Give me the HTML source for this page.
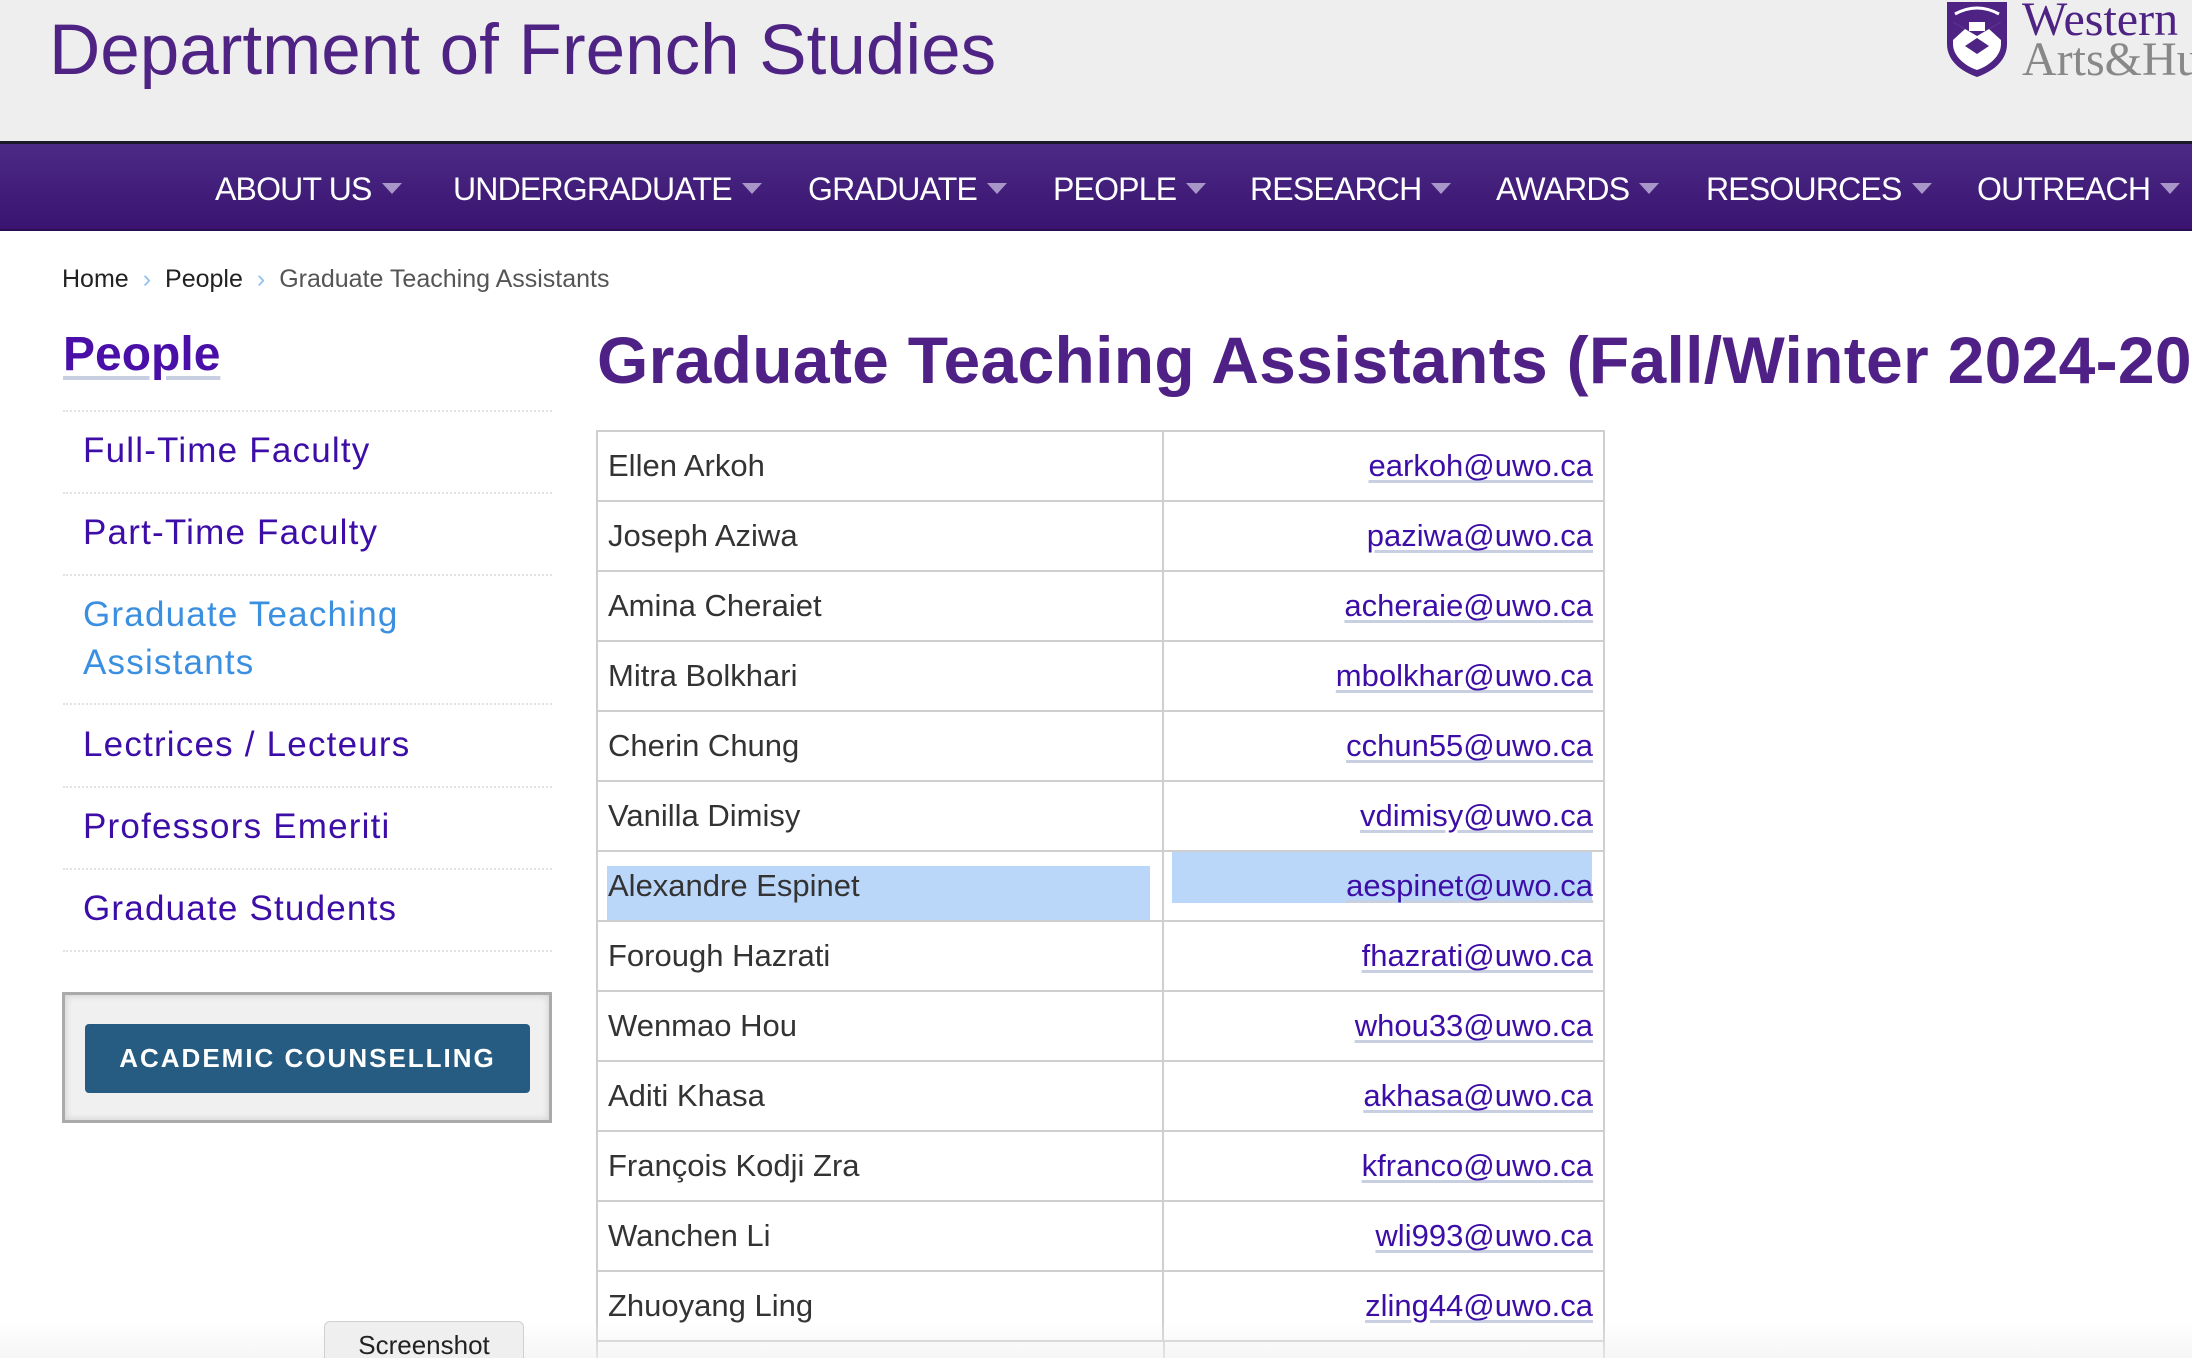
<!DOCTYPE html>
<html><head><meta charset="utf-8">
<style>
*{margin:0;padding:0;box-sizing:border-box}
html{width:2192px;height:1358px;overflow:hidden}
body{width:2192px;height:1358px;overflow:hidden;background:#fff;font-family:"Liberation Sans",Arial,sans-serif;position:relative}
.hdr{position:absolute;left:0;top:0;width:2192px;height:141px;background:#eeeeee}
.hdr h1{position:absolute;left:49px;top:10px;font-size:71px;font-weight:normal;color:#4e2384;white-space:nowrap}
.logo{position:absolute;left:1945px;top:0}
.wt{position:absolute;left:2022px;top:-4px;font-family:"Liberation Serif",serif;font-size:48px;color:#4e2384;white-space:nowrap;line-height:48px}
.wt2{top:36px;color:#888}
.navline{position:absolute;left:0;top:141px;width:2192px;height:3px;background:#1a1a2a}
.nav{position:absolute;left:0;top:144px;width:2192px;height:87px;background:linear-gradient(#4b2a86,#3a1470);border-bottom:2px solid #2a0f55}
.nav span{position:absolute;top:27px;font-size:32px;color:#fff;white-space:nowrap;letter-spacing:-0.8px}
.nav span:after{content:"";display:inline-block;margin-left:10px;vertical-align:6px;border-left:10px solid transparent;border-right:10px solid transparent;border-top:11px solid #a996c8}
.bc{position:absolute;left:62px;top:265px;font-size:25px;color:#222;white-space:nowrap}
.bc i{font-style:normal;color:#8fc0ee;margin:0 14px}
.bc b{font-weight:normal;color:#555}
.sbt{position:absolute;left:63px;top:327px;font-size:48px;font-weight:bold;color:#4a0fa8;text-decoration:underline;text-decoration-color:#c8cfe0;text-underline-offset:6px}
.dl{position:absolute;left:63px;width:489px;border-top:2px dotted #e2e2e2}
.sl{position:absolute;left:83px;font-size:35px;color:#3d0da8;letter-spacing:1.2px;line-height:48px;white-space:nowrap}
.box{position:absolute;left:62px;top:992px;width:490px;height:131px;border:3px solid #aaa;background:#f0f0f0;box-shadow:inset 0 0 8px rgba(0,0,0,.15)}
.btn{position:absolute;left:20px;top:29px;width:445px;height:69px;background:#265c82;border-radius:4px;color:#fff;font-size:26px;font-weight:bold;letter-spacing:2px;text-align:center;line-height:69px;white-space:nowrap}
.title{position:absolute;left:597px;top:322px;font-size:66px;font-weight:bold;color:#4f2186;white-space:nowrap;letter-spacing:0.3px;width:1595px;overflow:hidden}
table{position:absolute;left:596px;top:430px;border-collapse:collapse;width:1009px}
td{border:2px solid #cfcfcf;height:70px;font-size:31px;color:#333;padding:0 10px;white-space:nowrap}
td:first-child{width:566px}
td:last-child{text-align:right;color:#3d0da8;text-decoration:underline;text-decoration-color:#c8cfe0;text-underline-offset:4px}
.hl1{position:absolute;left:607px;top:866px;width:543px;height:54px;background:#bad6f8}
.hl2{position:absolute;left:1172px;top:852px;width:420px;height:51px;background:#bad6f8}
.shot{position:absolute;left:324px;top:1321px;width:200px;height:50px;background:#efefef;border:1px solid #d0d0d0;border-radius:6px;font-size:26px;color:#222;text-align:center;line-height:46px}
.fade{position:absolute;left:0;top:1320px;width:2192px;height:38px;background:linear-gradient(rgba(255,255,255,0),rgba(240,240,240,.6))}
.tail{position:absolute;left:596px;top:1340px;width:1009px;height:18px;border-left:2px solid #cfcfcf;border-right:2px solid #cfcfcf}
.tail:after{content:"";position:absolute;left:565px;top:0;height:18px;border-left:2px solid #cfcfcf}
</style></head><body>
<div class="hdr">
<h1>Department of French Studies</h1>
<svg class="logo" width="64" height="78" viewBox="0 0 64 78">
<path d="M2 2 H62 V44 C62 62 46 72 32 77 C18 72 2 62 2 44 Z" fill="#4e2384"/>
<path d="M8 22 L32 36 L56 22 L56 44 C56 56 44 66 32 70 C20 66 8 56 8 44 Z" fill="#fff"/>
<path d="M8 22 L20 29 L8 40Z M56 22 L44 29 L56 40Z" fill="#4e2384"/>
<path d="M32 38 L20 46 L32 54 L44 46Z" fill="#4e2384"/>
<rect x="24" y="22" width="16" height="9" fill="#fff"/>
<path d="M10 14 Q32 2 54 14" stroke="#fff" stroke-width="3" fill="none"/>
</svg>
<div class="wt">Western</div><div class="wt wt2">Arts&amp;Hu</div>
</div>
<div class="navline"></div>
<div class="nav">
<span style="left:215px">ABOUT US</span>
<span style="left:453px">UNDERGRADUATE</span>
<span style="left:808px">GRADUATE</span>
<span style="left:1053px">PEOPLE</span>
<span style="left:1250px">RESEARCH</span>
<span style="left:1496px">AWARDS</span>
<span style="left:1706px">RESOURCES</span>
<span style="left:1977px">OUTREACH</span>
</div>
<div class="bc">Home<i>›</i>People<i>›</i><b>Graduate Teaching Assistants</b></div>
<div class="sbt">People</div>
<div class="dl" style="top:410px"></div>
<div class="sl" style="top:427px">Full-Time Faculty</div>
<div class="dl" style="top:492px"></div>
<div class="sl" style="top:509px">Part-Time Faculty</div>
<div class="dl" style="top:574px"></div>
<div class="sl" style="top:591px;color:#3a8fe0">Graduate Teaching<br>Assistants</div>
<div class="dl" style="top:703px"></div>
<div class="sl" style="top:721px">Lectrices / Lecteurs</div>
<div class="dl" style="top:786px"></div>
<div class="sl" style="top:803px">Professors Emeriti</div>
<div class="dl" style="top:868px"></div>
<div class="sl" style="top:885px">Graduate Students</div>
<div class="dl" style="top:950px"></div>
<div class="box"><div class="btn">ACADEMIC COUNSELLING</div></div>
<div class="title">Graduate Teaching Assistants (Fall/Winter 2024-2025)</div>
<div class="hl1"></div><div class="hl2"></div>
<table>
<tr><td>Ellen Arkoh</td><td>earkoh@uwo.ca</td></tr>
<tr><td>Joseph Aziwa</td><td>paziwa@uwo.ca</td></tr>
<tr><td>Amina Cheraiet</td><td>acheraie@uwo.ca</td></tr>
<tr><td>Mitra Bolkhari</td><td>mbolkhar@uwo.ca</td></tr>
<tr><td>Cherin Chung</td><td>cchun55@uwo.ca</td></tr>
<tr><td>Vanilla Dimisy</td><td>vdimisy@uwo.ca</td></tr>
<tr><td>Alexandre Espinet</td><td>aespinet@uwo.ca</td></tr>
<tr><td>Forough Hazrati</td><td>fhazrati@uwo.ca</td></tr>
<tr><td>Wenmao Hou</td><td>whou33@uwo.ca</td></tr>
<tr><td>Aditi Khasa</td><td>akhasa@uwo.ca</td></tr>
<tr><td>François Kodji Zra</td><td>kfranco@uwo.ca</td></tr>
<tr><td>Wanchen Li</td><td>wli993@uwo.ca</td></tr>
<tr><td>Zhuoyang Ling</td><td>zling44@uwo.ca</td></tr>
</table>
<div class="tail"></div>
<div class="fade"></div>
<div class="shot">Screenshot</div>
</body></html>
